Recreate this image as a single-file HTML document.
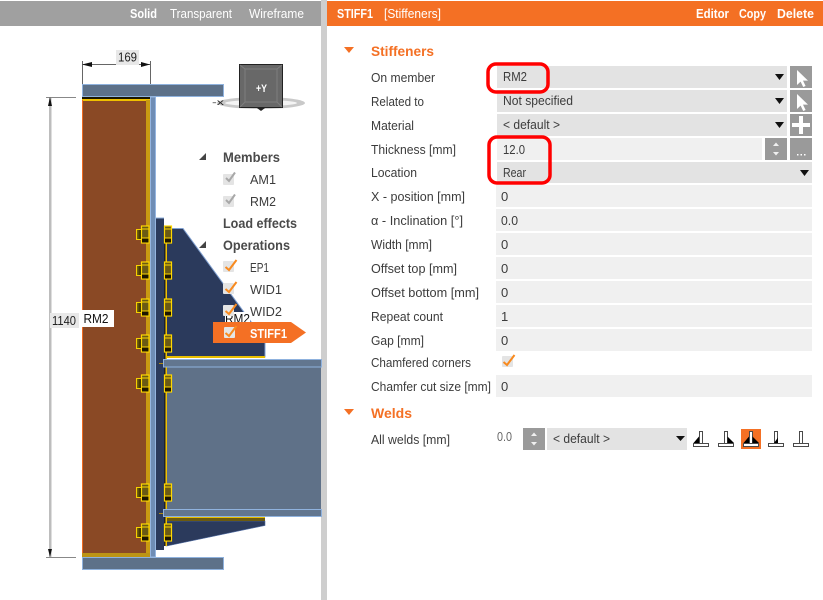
<!DOCTYPE html>
<html><head><meta charset="utf-8"><style>
html,body{margin:0;padding:0;background:#fff;width:823px;height:600px;overflow:hidden}
svg{display:block}
text{font-family:"Liberation Sans",sans-serif;font-size:13px;fill:#3c3c3c}
.b{font-weight:bold}
.w{fill:#fff}
.o{fill:#f47024;font-weight:bold;font-size:13.5px}
.d{fill:#4a4a4a;font-weight:bold;font-size:13.5px}
</style></head><body>
<svg width="823" height="600" viewBox="0 0 823 600" xmlns="http://www.w3.org/2000/svg">
<defs>
<linearGradient id="nub" x1="0" x2="1" y1="0" y2="0"><stop offset="0" stop-color="#8a7410"/><stop offset="1" stop-color="#1c1600"/></linearGradient>
<g id="bl">
<rect x="136.500" y="-5" width="5" height="10" fill="url(#nub)" stroke="#f5d000"/>
<rect x="141.500" y="-8.500" width="7.500" height="17" fill="#6a5a14" stroke="#ffd800" stroke-width="1.200"/>
<rect x="142" y="4" width="6.500" height="4" fill="#1c1600"/>
<path d="M141.500 3.500H149M141.500 -5.500H149" stroke="#ffd800"/>
<rect x="164.500" y="-8.500" width="7" height="17" fill="#6a5a14" stroke="#ffd800" stroke-width="1.200"/>
<rect x="165" y="4" width="6" height="4" fill="#1c1600"/>
<path d="M164.500 3.500H171.500M164.500 -5.500H171.500" stroke="#ffd800"/>
</g>
<g id="cb"><rect width="11" height="11" rx="1" fill="#e4e4e4"/></g>
<path id="tk" d="M1.500 7L5 10L12.500 0" fill="none" stroke="#f88a1f" stroke-width="2"/>
<path id="tg" d="M2 6L5 9L11 0.500" fill="none" stroke="#a8a8a8" stroke-width="2"/>
<path id="cur" d="M0 0V15L3.600 11.600L6.200 17L8.600 16L6 10.600H11Z" fill="#fff"/>
<g id="weld" fill="#fff" stroke="#4a4a4a" stroke-width="1">
<rect x="0.500" y="12.500" width="15" height="3"/>
<rect x="6.500" y="0.500" width="3" height="12"/>
</g>
</defs>

<!-- frame -->
<rect x="0" y="1" width="321" height="25" fill="#a0a0a0"/>
<rect x="321" y="0" width="6" height="600" fill="#cecece"/>
<rect x="327" y="1" width="496" height="25" fill="#f47024"/>
<text x="130" y="18" class="b w" textLength="27" lengthAdjust="spacingAndGlyphs">Solid</text>
<text x="170" y="18" class="w" textLength="62" lengthAdjust="spacingAndGlyphs">Transparent</text>
<text x="249" y="18" class="w" textLength="55" lengthAdjust="spacingAndGlyphs">Wireframe</text>

<!-- dimensions -->
<path d="M82.500 61V84M150.500 61V84M82 64.500H150" stroke="#666" fill="none"/>
<path d="M82 64.500L92 62V67ZM150 64.500L141 62V67Z" fill="#111"/>
<rect x="116" y="50" width="23" height="15" fill="#e8e8e8"/>
<text x="118" y="61.500" style="fill:#222" textLength="19" lengthAdjust="spacingAndGlyphs">169</text>
<rect x="49" y="97" width="2.500" height="460" fill="#bdbdbd"/>
<path d="M46 97.500H76M46 557.500H76" stroke="#888"/>
<path d="M50 97L48 106H52ZM50 557L48 549H52Z" fill="#111"/>
<rect x="50" y="313" width="29" height="15" fill="#e8e8e8"/>
<text x="52" y="325" style="fill:#222" textLength="24" lengthAdjust="spacingAndGlyphs">1140</text>

<!-- column -->
<rect x="82.500" y="84.500" width="141" height="12" fill="#5d7189" stroke="#8fb2de"/>
<rect x="82.500" y="557.500" width="141" height="12" fill="#5d7189" stroke="#8fb2de"/>
<rect x="82" y="97" width="68" height="3" fill="#1a1500"/>
<rect x="82" y="99" width="68" height="2" fill="#f0c000"/>
<rect x="82" y="101" width="65" height="455" fill="#8a4925"/>
<rect x="82" y="100" width="1" height="457" fill="#f06a20"/>
<rect x="146" y="100" width="4" height="457" fill="#c99a12"/>
<rect x="82" y="553" width="68" height="4" fill="#bd9414"/>
<rect x="150.500" y="97" width="5" height="460" fill="#6f8db5" stroke="#95b5e0"/>

<!-- stiffeners and end plate -->
<path d="M164 228.500H183L265 341V357H164Z" fill="#2b3a5c" stroke="#7f9fd0" stroke-width="1"/>
<path d="M166 521H265V525.500L167 546H166Z" fill="#2b3a5c" stroke="#5672a8" stroke-width="0.600"/>
<rect x="156" y="218" width="8" height="332" fill="#2b3a5c"/>
<path d="M156 218H164" stroke="#8fb2de"/>
<rect x="164" y="228" width="2" height="318" fill="#1c2230"/>
<rect x="165.500" y="228" width="1.500" height="318" fill="#f0c000"/>
<rect x="166" y="356" width="99" height="2" fill="#e8be00"/>
<rect x="167" y="518" width="98" height="3" fill="#6b5a10"/>
<path d="M167 517.500H265" stroke="#e8be00"/>

<!-- beam -->
<rect x="167" y="367" width="154" height="142" fill="#5f7188"/>
<rect x="163.500" y="359.500" width="158" height="7.500" fill="#62768f" stroke="#8fb2de"/>
<rect x="163.500" y="509.500" width="158" height="7" fill="#62768f" stroke="#8fb2de"/>
<path d="M159 363.500H163M159 513.500H163" stroke="#b08a10"/>

<!-- bolts -->
<use href="#bl" y="234.500"/><use href="#bl" y="270.500"/><use href="#bl" y="307.500"/><use href="#bl" y="343.500"/><use href="#bl" y="383.500"/><use href="#bl" y="492.500"/><use href="#bl" y="532.500"/>

<rect x="81" y="310" width="33" height="17" fill="#fff"/>
<text x="83.500" y="323" style="fill:#111" textLength="25" lengthAdjust="spacingAndGlyphs">RM2</text>

<!-- nav cube -->
<ellipse cx="261" cy="103" rx="44" ry="6" fill="#c9c9c9"/>
<ellipse cx="261" cy="103" rx="36" ry="3" fill="#f4f4f4"/>
<text x="212" y="105" style="fill:#222;font-size:8px" textLength="12" lengthAdjust="spacingAndGlyphs">-x</text>
<rect x="239.500" y="64.500" width="43" height="43" fill="#686868" stroke="#222"/>
<path d="M240 65L245 69H277L282 65M240 107L245 102V69M282 107L277 102V69M245 102H277" fill="none" stroke="#7e7e7e"/>
<text x="256" y="92" class="b w" style="font-size:11px" textLength="11" lengthAdjust="spacingAndGlyphs">+Y</text>
<path d="M257 108H265L261 111Z" fill="#222"/>

<!-- tree -->
<path d="M206 153V160H199ZM206 241V248H199Z" fill="#444"/>
<text x="223" y="162" class="d" textLength="57" lengthAdjust="spacingAndGlyphs">Members</text>
<use href="#cb" x="223" y="174"/><use href="#tg" x="224" y="172"/>
<text x="250" y="184" textLength="26" lengthAdjust="spacingAndGlyphs">AM1</text>
<use href="#cb" x="223" y="196"/><use href="#tg" x="224" y="194"/>
<text x="250" y="206" textLength="26" lengthAdjust="spacingAndGlyphs">RM2</text>
<text x="223" y="228" class="d" textLength="74" lengthAdjust="spacingAndGlyphs">Load effects</text>
<text x="223" y="250" class="d" textLength="67" lengthAdjust="spacingAndGlyphs">Operations</text>
<use href="#cb" x="223" y="261"/><use href="#tk" x="224" y="260"/>
<text x="250" y="272" textLength="19" lengthAdjust="spacingAndGlyphs">EP1</text>
<use href="#cb" x="223" y="283"/><use href="#tk" x="224" y="282"/>
<text x="250" y="294" textLength="32" lengthAdjust="spacingAndGlyphs">WID1</text>
<rect x="225" y="312" width="25" height="12" fill="#fff"/>
<text x="225" y="323" style="fill:#111" textLength="25" lengthAdjust="spacingAndGlyphs">RM2</text>
<use href="#cb" x="223" y="305"/><use href="#tk" x="224" y="304"/>
<text x="250" y="316" textLength="32" lengthAdjust="spacingAndGlyphs">WID2</text>
<path d="M213 322H291L306 332.500L291 343H213Z" fill="#f47024"/>
<use href="#cb" x="224" y="327"/><use href="#tk" x="224" y="326"/>
<text x="250" y="338" class="b w" textLength="37" lengthAdjust="spacingAndGlyphs">STIFF1</text>

<!-- right header -->
<text x="337" y="18" class="b w" textLength="36" lengthAdjust="spacingAndGlyphs">STIFF1</text>
<text x="384" y="18" class="w" textLength="57" lengthAdjust="spacingAndGlyphs">[Stiffeners]</text>
<text x="696" y="18" class="b w" textLength="33" lengthAdjust="spacingAndGlyphs">Editor</text>
<text x="739" y="18" class="b w" textLength="27" lengthAdjust="spacingAndGlyphs">Copy</text>
<text x="777" y="18" class="b w" textLength="37" lengthAdjust="spacingAndGlyphs">Delete</text>

<!-- section heads -->
<path d="M344 47H354L349 53Z" fill="#f47024"/>
<text x="371" y="56" class="o" textLength="63" lengthAdjust="spacingAndGlyphs">Stiffeners</text>
<path d="M344 409H354L349 415Z" fill="#f47024"/>
<text x="371" y="418" class="o" textLength="41" lengthAdjust="spacingAndGlyphs">Welds</text>

<!-- fields -->
<rect x="497" y="66" width="290" height="22" fill="#e3e3e3"/>
<rect x="497" y="90" width="290" height="22" fill="#e3e3e3"/>
<rect x="497" y="114" width="290" height="22" fill="#e3e3e3"/>
<rect x="497" y="138" width="265" height="22" fill="#f0f0f0"/>
<rect x="497" y="162" width="315" height="21" fill="#e3e3e3"/>
<rect x="496" y="185" width="316" height="22" fill="#f0f0f0"/>
<rect x="496" y="209" width="316" height="22" fill="#f0f0f0"/>
<rect x="496" y="233" width="316" height="22" fill="#f0f0f0"/>
<rect x="496" y="257" width="316" height="22" fill="#f0f0f0"/>
<rect x="496" y="281" width="316" height="22" fill="#f0f0f0"/>
<rect x="496" y="305" width="316" height="22" fill="#f0f0f0"/>
<rect x="496" y="329" width="316" height="22" fill="#f0f0f0"/>
<rect x="496" y="375" width="316" height="22" fill="#f0f0f0"/>
<rect x="547" y="428" width="140" height="22" fill="#e3e3e3"/>

<!-- dropdown arrows -->
<path d="M775 74H784L779.500 80ZM775 98H784L779.500 104ZM775 122H784L779.500 128ZM800 170H809L804.500 176ZM676 436H685L680.500 441Z" fill="#111"/>

<!-- buttons -->
<rect x="790" y="66" width="22" height="22" fill="#9a9a9a"/><use href="#cur" x="797" y="70"/>
<rect x="790" y="90" width="22" height="22" fill="#9a9a9a"/><use href="#cur" x="797" y="94"/>
<rect x="790" y="114" width="22" height="22" fill="#9a9a9a"/>
<path d="M799 116H803V123H810V127H803V134H799V127H792V123H799Z" fill="#fff"/>
<rect x="765" y="138" width="22" height="22" fill="#9a9a9a"/>
<path d="M773 146L776 142.500L779 146ZM773 152L776 155.500L779 152Z" fill="#f0f0f0"/>
<rect x="790" y="138" width="22" height="22" fill="#9a9a9a"/>
<path d="M797 154h1.500v1.500h-1.500zM800.500 154h1.500v1.500h-1.500zM804 154h1.500v1.500h-1.500z" fill="#fff"/>

<!-- labels -->
<text x="371" y="82" textLength="64" lengthAdjust="spacingAndGlyphs">On member</text>
<text x="371" y="106" textLength="53" lengthAdjust="spacingAndGlyphs">Related to</text>
<text x="371" y="130" textLength="43" lengthAdjust="spacingAndGlyphs">Material</text>
<text x="371" y="154" textLength="85" lengthAdjust="spacingAndGlyphs">Thickness [mm]</text>
<text x="371" y="177" textLength="46" lengthAdjust="spacingAndGlyphs">Location</text>
<text x="371" y="201" textLength="94" lengthAdjust="spacingAndGlyphs">X - position [mm]</text>
<text x="371" y="225" textLength="92" lengthAdjust="spacingAndGlyphs">α - Inclination [°]</text>
<text x="371" y="249" textLength="61" lengthAdjust="spacingAndGlyphs">Width [mm]</text>
<text x="371" y="273" textLength="86" lengthAdjust="spacingAndGlyphs">Offset top [mm]</text>
<text x="371" y="297" textLength="108" lengthAdjust="spacingAndGlyphs">Offset bottom [mm]</text>
<text x="371" y="321" textLength="72" lengthAdjust="spacingAndGlyphs">Repeat count</text>
<text x="371" y="345" textLength="53" lengthAdjust="spacingAndGlyphs">Gap [mm]</text>
<text x="371" y="367" textLength="100" lengthAdjust="spacingAndGlyphs">Chamfered corners</text>
<text x="371" y="391" textLength="120" lengthAdjust="spacingAndGlyphs">Chamfer cut size [mm]</text>
<text x="371" y="444" textLength="79" lengthAdjust="spacingAndGlyphs">All welds [mm]</text>

<!-- values -->
<text x="503" y="81" textLength="24" lengthAdjust="spacingAndGlyphs">RM2</text>
<text x="503" y="105" textLength="70" lengthAdjust="spacingAndGlyphs">Not specified</text>
<text x="503" y="129" textLength="57" lengthAdjust="spacingAndGlyphs">&lt; default &gt;</text>
<text x="503" y="154" textLength="22" lengthAdjust="spacingAndGlyphs">12.0</text>
<text x="503" y="177" textLength="23" lengthAdjust="spacingAndGlyphs">Rear</text>
<text x="501" y="201">0</text>
<text x="501" y="225" textLength="17" lengthAdjust="spacingAndGlyphs">0.0</text>
<text x="501" y="249">0</text>
<text x="501" y="273">0</text>
<text x="501" y="297">0</text>
<text x="501" y="321">1</text>
<text x="501" y="345">0</text>
<text x="501" y="391">0</text>
<use href="#cb" x="502" y="356"/><use href="#tk" x="502" y="355"/>

<!-- welds row -->
<text x="497" y="441" style="fill:#666" textLength="15" lengthAdjust="spacingAndGlyphs">0.0</text>
<rect x="523" y="428" width="22" height="22" fill="#9a9a9a"/>
<path d="M531 436L534 432.500L537 436ZM531 442L534 445.500L537 442Z" fill="#f0f0f0"/>
<text x="553" y="443" textLength="57" lengthAdjust="spacingAndGlyphs">&lt; default &gt;</text>

<use href="#weld" x="693" y="431"/>
<path d="M693.500 443H699V436.500Z" fill="#000"/>
<use href="#weld" x="718" y="431"/>
<path d="M734 443H727.500V436.500Z" fill="#000"/>
<rect x="741" y="429" width="20" height="20" fill="#f47024"/>
<use href="#weld" x="743" y="431"/>
<path d="M743.500 443H749V436.500ZM759 443H752.500V436.500Z" fill="#000"/>
<use href="#weld" x="768" y="431"/>
<path d="M774 443H778V437.500Z" fill="#000"/>
<use href="#weld" x="793" y="431"/>

<!-- red highlights -->
<rect x="488" y="64" width="60" height="28" rx="8" fill="none" stroke="#f00" stroke-width="3.500"/>
<rect x="489" y="137" width="61" height="46" rx="8" fill="none" stroke="#f00" stroke-width="3.500"/>
</svg>
</body></html>
